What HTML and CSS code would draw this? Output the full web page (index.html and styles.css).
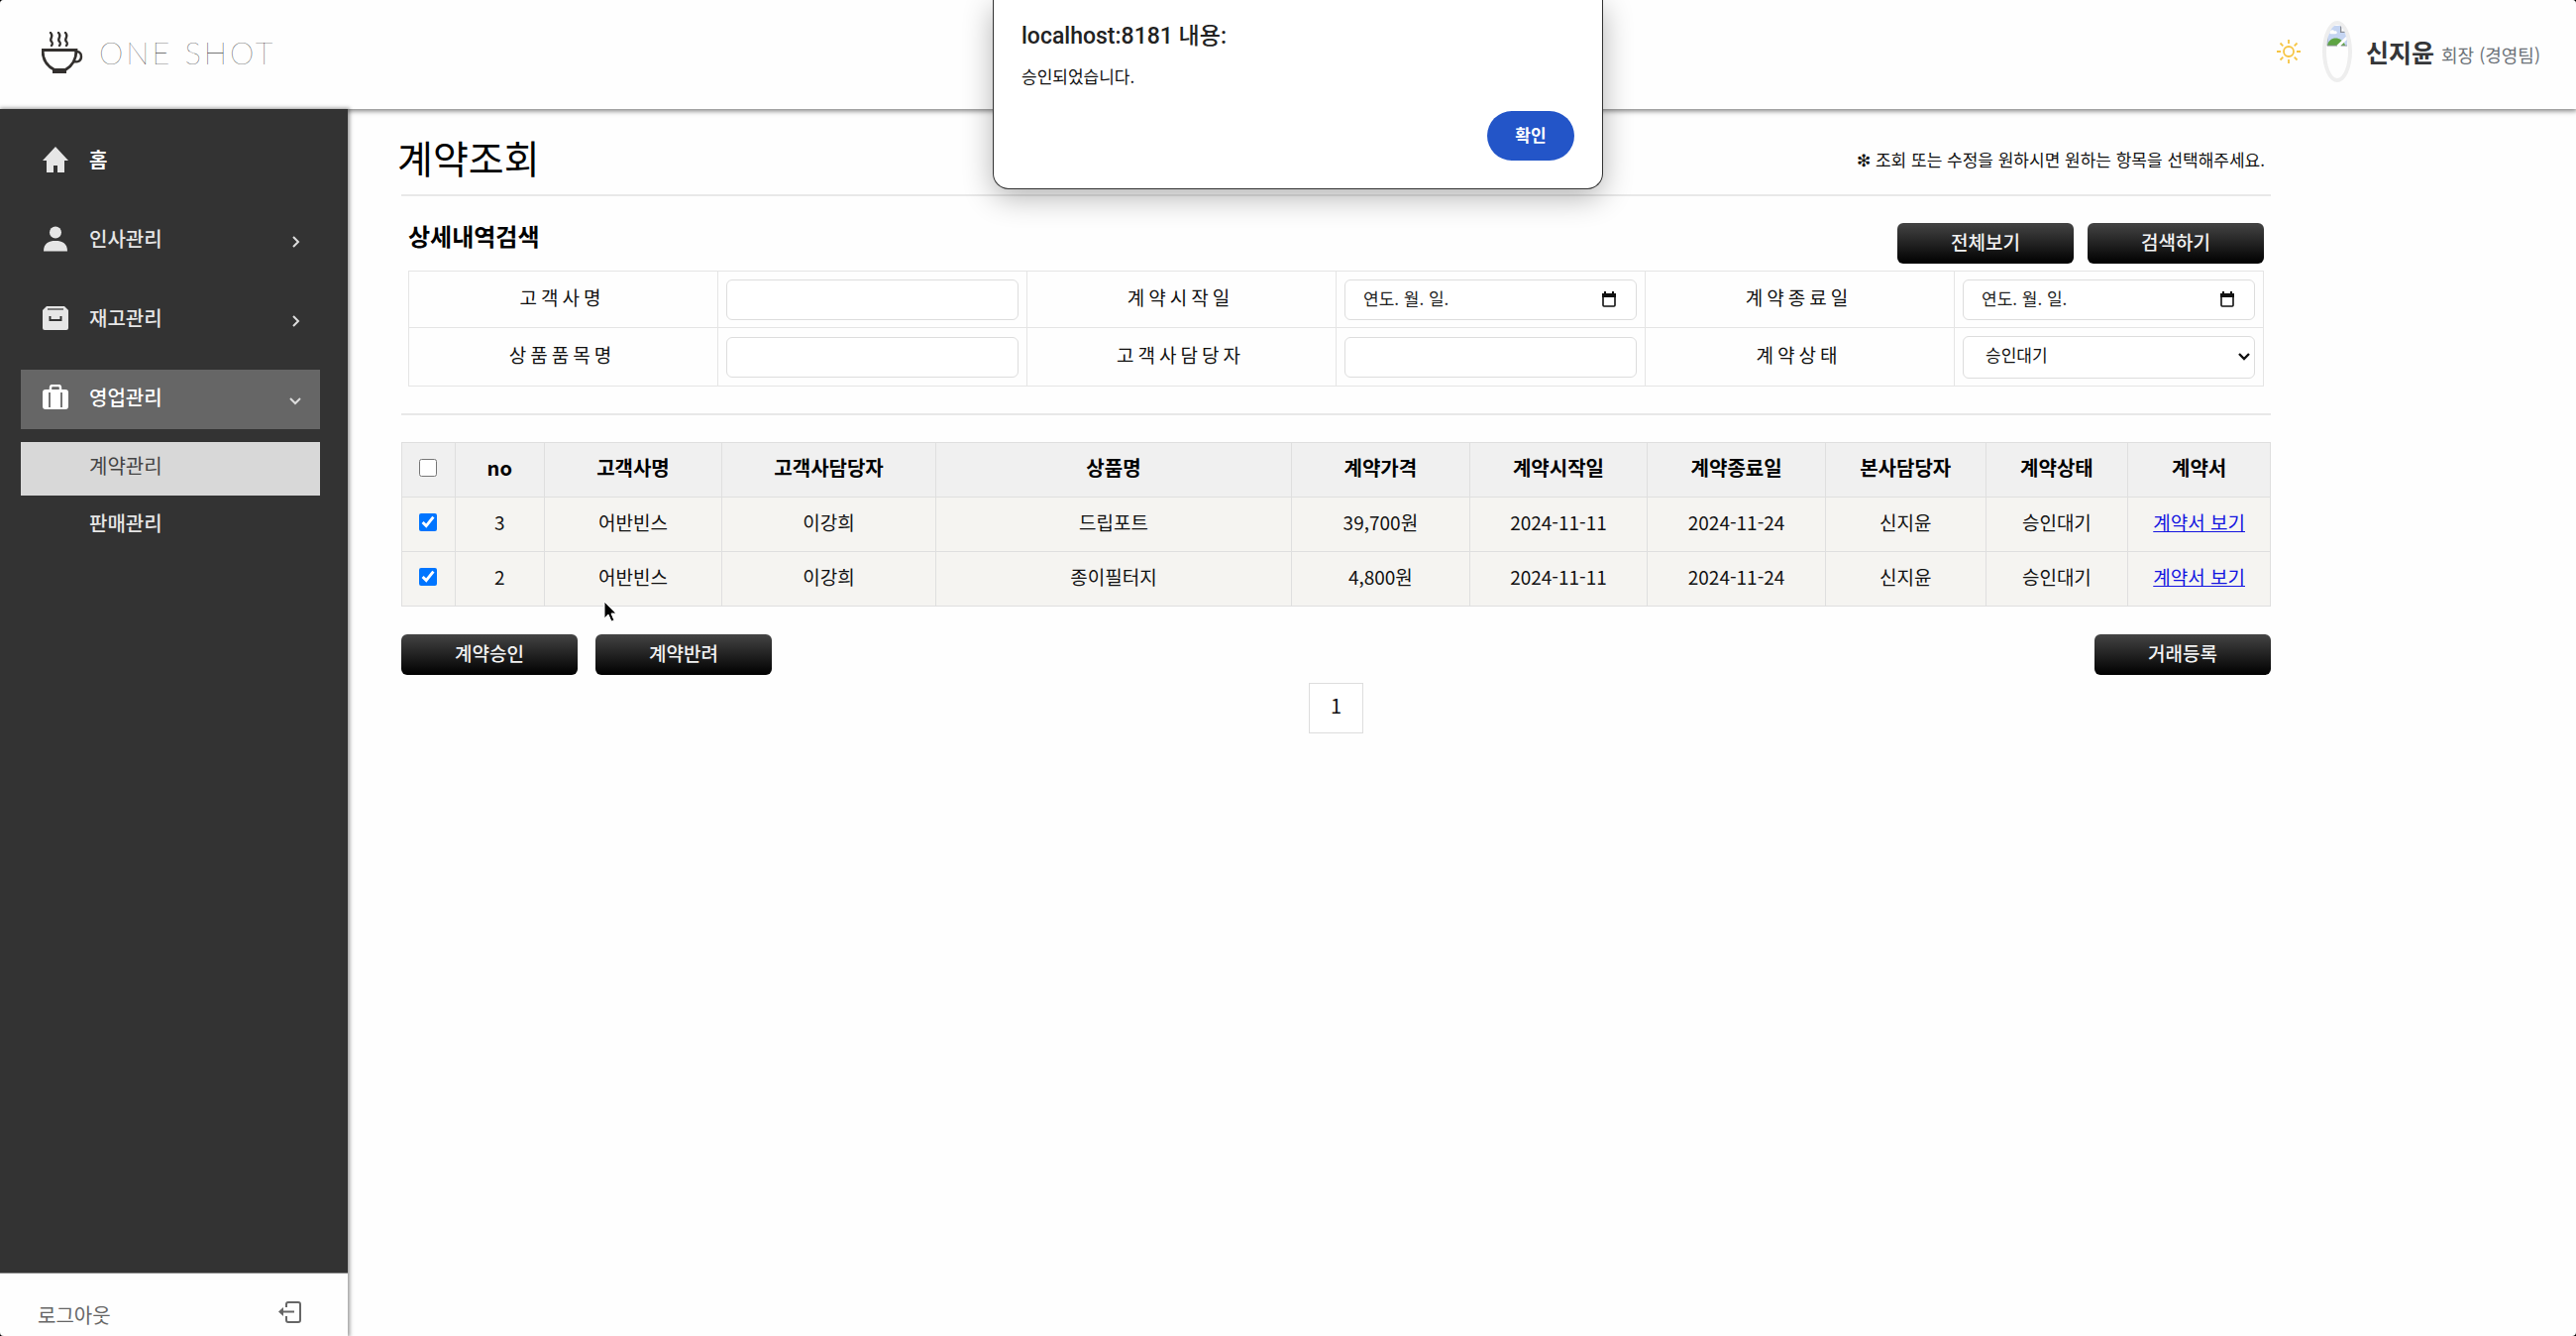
FILE: index.html
```html
<!DOCTYPE html>
<html lang="ko">
<head>
<meta charset="utf-8">
<meta name="viewport" content="width=device-width, initial-scale=1">
<title>ONE SHOT - 계약조회</title>
<link rel="stylesheet" href="styles.css">
</head>
<body>
<div class="app">
  <header class="header">
    <a class="logo" href="#">
      <svg class="logo-cup" viewBox="0 0 42 42" fill="none" stroke="#33302e" stroke-width="2.400">
        <path d="M9 1c4 4-2 6 1 9 1 1 1 3 0 4M17 1c4 4-2 6 1 9 1 1 1 3 0 4M24 1c4 4-2 6 1 9 1 1 1 3 0 4" stroke-linecap="round"/>
        <path d="M1 18.500h34c0 10-4 16-11 20H13C6 35 1 28 1 18.500z" stroke-width="2.800"/>
        <path d="M34 21c3-2 6 0 6 4 0 5-4 6-7 5"/>
        <path d="M11 40.500h14" stroke-width="3"/>
      </svg>
      <span class="logo-text">ONE SHOT</span>
    </a>
    <div class="user">
      <svg class="sun" viewBox="0 0 24 24" fill="none" stroke="#f6c544" stroke-width="1.800">
        <circle cx="12" cy="12" r="5"/>
        <path d="M12 0v4M12 20v4M0 12h4M20 12h4M3.500 3.500l2.800 2.800M17.700 17.700l2.800 2.800M3.500 20.500l2.800-2.800M17.700 6.300l2.800-2.800"/>
      </svg>
      <span class="avatar">
        <svg viewBox="0 0 24 24" role="img" aria-label="프로필 사진">
          <path d="M1 1h15l7 7v15H1z" fill="#c5d5f2"/>
          <path d="M16 1v7h7" fill="#fff" stroke="#8a8f98" stroke-width="1.500"/>
          <path d="M4 8c0-3 4-3 5-1 3-1 4 3 1 3H5c-2 0-2-2-1-2z" fill="#fff"/>
          <path d="M1 23c2-11 16-11 20 0z" fill="#5fa544"/>
          <path d="M10 24L24 11v4l-9 9z" fill="#fff"/>
          <path d="M1 1v22h11M16 23h7" fill="none" stroke="#8a8f98" stroke-width="1"/>
        </svg>
      </span>
      <span class="user-name">신지윤</span>
      <span class="user-role">회장 (경영팀)</span>
    </div>
  </header>

  <div class="body">
    <aside class="sidebar">
      <nav class="menu">
        <a class="menu-item menu-item-home" href="#">
          <svg class="menu-icon" viewBox="0 0 26 26" fill="#e6e6e6"><path d="M13 0L0 14h4v12h7v-7h4v7h7V14h4z"/></svg>
          <span class="menu-label">홈</span>
        </a>
        <a class="menu-item" href="#">
          <svg class="menu-icon" viewBox="0 0 26 26" fill="currentColor"><circle cx="13" cy="6.500" r="6"/><path d="M1 25.500c0-8 5-10.500 12-10.500s12 2.500 12 10.500z"/></svg>
          <span class="menu-label">인사관리</span>
          <svg class="menu-arrow" viewBox="0 0 12 12"><path d="M4 1l5 5-5 5"/></svg>
        </a>
        <a class="menu-item" href="#">
          <svg class="menu-icon" viewBox="0 0 26 26"><path d="M4 1h18l4 4v18a2 2 0 0 1-2 2H2a2 2 0 0 1-2-2V5z" fill="currentColor"/><path d="M5 4h16" stroke="#555" stroke-width="1.500"/><path d="M7.500 11v4h11v-4" fill="none" stroke="#333" stroke-width="2"/></svg>
          <span class="menu-label">재고관리</span>
          <svg class="menu-arrow" viewBox="0 0 12 12"><path d="M4 1l5 5-5 5"/></svg>
        </a>
        <a class="menu-item menu-item-active" href="#">
          <svg class="menu-icon" viewBox="0 0 26 26"><rect y="5" width="26" height="20" rx="3" fill="currentColor"/><path d="M8 6V3a2 2 0 0 1 2-2h6a2 2 0 0 1 2 2v3" fill="none" stroke="currentColor" stroke-width="2.400"/><path d="M7 8v15M19 8v15" stroke="#666" stroke-width="1.800"/></svg>
          <span class="menu-label">영업관리</span>
          <svg class="menu-arrow" viewBox="0 0 12 12"><path d="M1 4l5 5 5-5"/></svg>
        </a>
        <div class="submenu">
          <a class="submenu-item submenu-item-active" href="#">계약관리</a>
          <a class="submenu-item" href="#">판매관리</a>
        </div>
      </nav>
      <a class="logout" href="#">
        <span>로그아웃</span>
        <svg class="logout-icon" viewBox="0 0 24 22" fill="none" stroke="#666" stroke-width="2"><path d="M8 6V3a2 2 0 0 1 2-2h10a2 2 0 0 1 2 2v16a2 2 0 0 1-2 2H10a2 2 0 0 1-2-2v-4M3 10.500h13"/><path d="M0 10.500L5 6v9z" fill="#666" stroke="none"/></svg>
      </a>
    </aside>

    <main class="main">
      <div class="content">
        <div class="page-head">
          <h1 class="page-title">계약조회</h1>
          <p class="page-note">❇ 조회 또는 수정을 원하시면 원하는 항목을 선택해주세요.</p>
        </div>

        <form class="search">
          <div class="search-head">
            <h2 class="search-title">상세내역검색</h2>
            <div class="search-actions">
              <button class="btn" type="button">전체보기</button>
              <button class="btn" type="button">검색하기</button>
            </div>
          </div>
          <div class="fields">
            <label class="field-label" for="client">고객사명</label>
            <div class="field"><input class="control" id="client" type="text"></div>
            <label class="field-label" for="start">계약시작일</label>
            <div class="field">
              <input class="control" id="start" type="text" placeholder="연도. 월. 일.">
              <svg class="calendar" viewBox="0 0 14 16"><path d="M1 3h12v11a1 1 0 0 1-1 1H2a1 1 0 0 1-1-1z" fill="none" stroke="#111" stroke-width="1.600"/><path d="M0 2h14v4H0zM2 0h2v3H2zM10 0h2v3h-2z" fill="#111"/></svg>
            </div>
            <label class="field-label" for="end">계약종료일</label>
            <div class="field">
              <input class="control" id="end" type="text" placeholder="연도. 월. 일.">
              <svg class="calendar" viewBox="0 0 14 16"><path d="M1 3h12v11a1 1 0 0 1-1 1H2a1 1 0 0 1-1-1z" fill="none" stroke="#111" stroke-width="1.600"/><path d="M0 2h14v4H0zM2 0h2v3H2zM10 0h2v3h-2z" fill="#111"/></svg>
            </div>
            <label class="field-label" for="item">상품품목명</label>
            <div class="field"><input class="control" id="item" type="text"></div>
            <label class="field-label" for="manager">고객사담당자</label>
            <div class="field"><input class="control" id="manager" type="text"></div>
            <label class="field-label" for="status">계약상태</label>
            <div class="field">
              <select class="control control-select" id="status"><option>승인대기</option></select>
              <svg class="chevron" viewBox="0 0 12 8"><path d="M1 1l5 5 5-5" fill="none" stroke="#111" stroke-width="2.400"/></svg>
            </div>
          </div>
        </form>

        <table class="contracts">
          <colgroup>
            <col class="w3"><col class="w5"><col class="w10"><col class="w12"><col class="w20"><col class="w10"><col class="w10"><col class="w10"><col class="w9"><col class="w8"><col class="w8">
          </colgroup>
          <thead>
            <tr>
              <th><input class="check" type="checkbox" aria-label="전체 선택"></th>
              <th>no</th><th>고객사명</th><th>고객사담당자</th><th>상품명</th><th>계약가격</th><th>계약시작일</th><th>계약종료일</th><th>본사담당자</th><th>계약상태</th><th>계약서</th>
            </tr>
          </thead>
          <tbody>
            <tr>
              <td><input class="check" type="checkbox" checked aria-label="3번 선택"></td>
              <td>3</td><td>어반빈스</td><td>이강희</td><td>드립포트</td><td>39,700원</td><td>2024-11-11</td><td>2024-11-24</td><td>신지윤</td><td>승인대기</td><td><a class="doc" href="#">계약서 보기</a></td>
            </tr>
            <tr>
              <td><input class="check" type="checkbox" checked aria-label="2번 선택"></td>
              <td>2</td><td>어반빈스</td><td>이강희</td><td>종이필터지</td><td>4,800원</td><td>2024-11-11</td><td>2024-11-24</td><td>신지윤</td><td>승인대기</td><td><a class="doc" href="#">계약서 보기</a></td>
            </tr>
          </tbody>
        </table>

        <div class="table-actions">
          <button class="btn" type="button">계약승인</button>
          <button class="btn" type="button">계약반려</button>
          <button class="btn btn-end" type="button">거래등록</button>
        </div>
        <nav class="pages"><a class="page" href="#">1</a></nav>
      </div>
    </main>
  </div>

  <div class="dialog" role="alertdialog" aria-labelledby="dialog-title" aria-describedby="dialog-text">
    <strong class="dialog-title" id="dialog-title">localhost:8181 내용:</strong>
    <p class="dialog-text" id="dialog-text">승인되었습니다.</p>
    <button class="dialog-ok" type="button">확인</button>
  </div>

  <svg class="cursor" viewBox="0 0 14 23"><path d="M1 1v17l4-4 3 7 3-1-3-7h5z" fill="#000" stroke="#fff" stroke-width="1"/></svg>
</div>
</body>
</html>
```
FILE: styles.css
```css
* {
  box-sizing: border-box;
}

html {
  background: #000;
}

body {
  margin: 0;
  font-family: "Noto Sans CJK KR", sans-serif;
  font-size: 19px;
  line-height: 28px;
  color: #111;
}

button,
input,
select {
  font: inherit;
  color: inherit;
}

h1,
h2,
p {
  margin: 0;
}

svg {
  display: block;
  flex: none;
}

.app {
  position: relative;
  display: flex;
  flex-direction: column;
  min-height: 100vh;
  overflow: hidden;
  background: #fefefe;
  border-radius: 4px;
}

/* header */

.header {
  position: relative;
  display: flex;
  align-items: center;
  justify-content: space-between;
  height: 110px;
  padding: 0 36px 4px 42px;
  background: #fefefe;
  box-shadow: 0 1px 5px 1px rgba(0, 0, 0, 0.5);
}

.logo {
  display: flex;
  align-items: center;
  gap: 16px;
  text-decoration: none;
}

.logo-cup {
  width: 42px;
  height: 42px;
}

.logo-text {
  font-family: Lato, sans-serif;
  font-size: 31px;
  font-weight: 100;
  letter-spacing: 3px;
  line-height: 32px;
  color: #000;
}

.user {
  display: flex;
  align-items: center;
  padding-bottom: 2px;
}

.sun {
  width: 24px;
  height: 24px;
  margin-right: 22px;
}

.avatar {
  display: block;
  width: 30px;
  height: 62px;
  margin-right: 14px;
  overflow: hidden;
  border: 4px solid #eee;
  border-radius: 50%;
}

.avatar svg {
  width: 22px;
  height: 22px;
}

.user-name {
  margin-right: 7px;
  font-size: 25px;
  font-weight: 700;
  color: #343638;
}

.user-role {
  padding-top: 6px;
  font-size: 18px;
  color: #6c7278;
}

/* sidebar */

.body {
  display: flex;
  flex: 1;
}

.sidebar {
  z-index: 1;
  display: flex;
  flex: none;
  flex-direction: column;
  justify-content: space-between;
  width: 351px;
  background: #333;
  box-shadow: 1px 0 4px 1px rgba(0, 0, 0, 0.4);
}

.menu {
  display: flex;
  flex-direction: column;
  gap: 20px;
  padding: 23px 28px 0 21px;
}

.menu-item {
  display: flex;
  align-items: center;
  height: 60px;
  padding: 0 19px 4px 22px;
  font-size: 20px;
  font-weight: 500;
  color: #e6e6e6;
  text-decoration: none;
}

.menu-item-home {
  font-weight: 700;
  color: #fff;
}

.menu-item-active {
  color: #fff;
  background: #666;
}

.menu-icon {
  width: 26px;
  height: 26px;
  margin-right: 21px;
}

.menu-arrow {
  width: 12px;
  height: 12px;
  margin: 6px 0 0 auto;
  fill: none;
  stroke: #ddd;
  stroke-width: 2;
}

.submenu {
  display: flex;
  flex-direction: column;
  gap: 4px;
  margin-top: -7px;
}

.submenu-item {
  height: 54px;
  padding: 10px 0 0 69px;
  font-size: 20px;
  font-weight: 500;
  color: #e6e6e6;
  text-decoration: none;
}

.submenu-item-active {
  font-weight: 400;
  color: #444;
  background: #d8d8d8;
}

.logout {
  display: flex;
  justify-content: space-between;
  height: 64px;
  padding: 28px 46px 0 38px;
  font-size: 20px;
  color: #666;
  text-decoration: none;
  background: #fefefe;
  border-top: 1px solid #888;
}

.logout-icon {
  width: 24px;
  height: 22px;
}

/* main column */

.main {
  flex: 1;
  min-width: 0;
  padding: 0 54px;
}

.content {
  max-width: 1887px;
}

.page-head {
  display: flex;
  align-items: center;
  justify-content: space-between;
  height: 88px;
  padding: 9px 6px 0 0;
  border-bottom: 2px solid #e8e8e8;
}

.page-title {
  margin-left: -4px;
  font-size: 39px;
  font-weight: 400;
  line-height: 48px;
  color: #000;
}

.page-note {
  padding-top: 6px;
  font-size: 17px;
}

.search {
  padding: 27px 7px 27px;
  border-bottom: 2px solid #e8e8e8;
}

.search-head {
  display: flex;
  justify-content: space-between;
  margin-bottom: 7px;
}

.search-title {
  font-size: 24px;
  font-weight: 700;
  line-height: 26px;
  color: #000;
}

.search-actions {
  display: flex;
  gap: 14px;
}

.btn {
  width: 178px;
  height: 41px;
  padding: 0 0 3px;
  font-weight: 500;
  color: #f2f2f2;
  background: linear-gradient(#444, #000);
  border: 0;
  border-radius: 6px;
}

.fields {
  display: grid;
  grid-template-columns: repeat(6, 1fr);
  grid-template-rows: 57px 59px;
  border: 1px solid #e5e5e5;
  border-width: 1px 0 0 1px;
}

.field-label {
  display: flex;
  align-items: center;
  justify-content: center;
  padding: 0 2px 4px 0;
  letter-spacing: 4px;
  border: 1px solid #e5e5e5;
  border-width: 0 1px 1px 0;
}

.field {
  position: relative;
  display: flex;
  align-items: center;
  padding: 0 8px;
  border: 1px solid #e5e5e5;
  border-width: 0 1px 1px 0;
}

.control {
  width: 100%;
  height: 41px;
  padding: 0 18px 4px;
  font-size: 17px;
  background: #fff;
  border: 1px solid #ddd;
  border-radius: 6px;
}

.control::placeholder {
  color: #222;
  opacity: 1;
}

.control-select {
  height: 43px;
  padding-left: 22px;
  appearance: none;
}

.calendar {
  position: absolute;
  right: 29px;
  width: 14px;
  height: 16px;
}

.chevron {
  position: absolute;
  right: 13px;
  width: 12px;
  height: 8px;
}

/* contract table */

.contracts {
  width: 100%;
  margin-top: 27px;
  table-layout: fixed;
  border-collapse: collapse;
}

.w3 { width: 3%; }
.w5 { width: 5%; }
.w8 { width: 8%; }
.w9 { width: 9%; }
.w10 { width: 10%; }
.w12 { width: 12%; }
.w20 { width: 20%; }

.contracts th,
.contracts td {
  height: 55px;
  padding: 0 0 5px;
  text-align: center;
  background: #f5f4f1;
  border: 1px solid #dfdfdf;
}

.contracts th {
  font-size: 20px;
  font-weight: 700;
  color: #000;
  background: #f0f0f0;
}

.check {
  display: block;
  width: 18px;
  height: 18px;
  margin: 0 auto;
}

.doc {
  color: #1414e0;
}

.table-actions {
  display: flex;
  gap: 18px;
  margin-top: 28px;
}

.btn-end {
  margin-left: auto;
}

.pages {
  display: flex;
  justify-content: center;
  margin-top: 8px;
}

.page {
  width: 55px;
  height: 51px;
  padding-top: 8px;
  font-size: 20px;
  color: #111;
  text-align: center;
  text-decoration: none;
  background: #fff;
  border: 1px solid #ddd;
}

/* browser alert */

.dialog {
  position: absolute;
  top: 0;
  left: 50%;
  z-index: 2;
  display: flex;
  flex-direction: column;
  width: 616px;
  height: 191px;
  margin-left: 10px;
  padding: 21px 28px 28px;
  background: #fff;
  border: 1px solid #333;
  border-top: 0;
  border-radius: 0 0 16px 16px;
  box-shadow: 0 8px 30px rgba(0, 0, 0, 0.3);
  transform: translateX(-50%);
}

.dialog-title {
  font-family: Roboto, "Noto Sans CJK KR", sans-serif;
  font-size: 23px;
  font-weight: 500;
  line-height: 32px;
  color: #222;
}

.dialog-text {
  margin-top: 10px;
  font-size: 17px;
}

.dialog-ok {
  align-self: flex-end;
  width: 88px;
  height: 50px;
  margin-top: auto;
  padding: 0 0 2px;
  font-size: 17px;
  font-weight: 700;
  color: #fff;
  background: #2355c8;
  border: 0;
  border-radius: 25px;
}

.cursor {
  position: absolute;
  top: 606px;
  left: 609px;
  width: 14px;
  height: 23px;
}
```
